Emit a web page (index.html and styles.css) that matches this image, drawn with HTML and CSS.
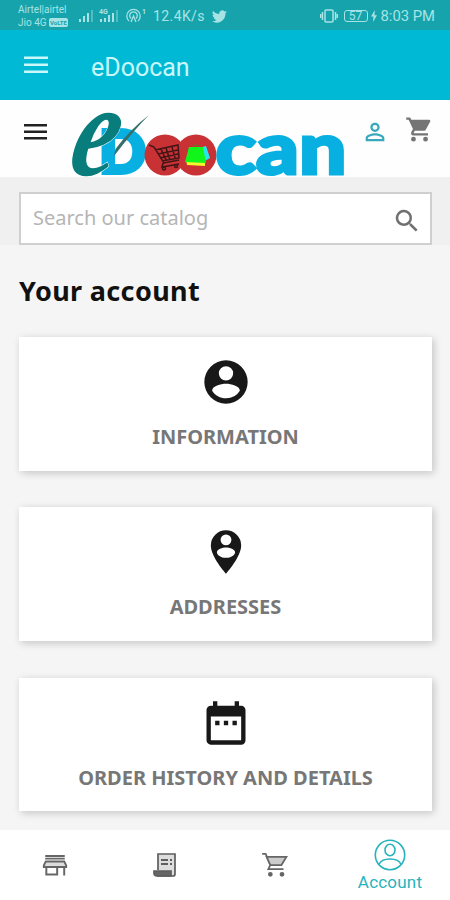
FILE: index.html
```html
<!DOCTYPE html>
<html lang="en">
<head>
<meta charset="utf-8">
<title>eDoocan</title>
<link rel="stylesheet" href="styles.css">
</head>
<body>
<div class="status">
  <div class="carriers"><span>Airtel|airtel</span><span>Jio 4G <b>VoLTE</b></span></div>
  <svg class="signals" width="70" height="20" viewBox="0 0 70 20" fill="currentColor">
    <path d="M0 13h2v3H0zM4 10h2v6H4zM8 7h2v9H8z"/><path opacity=".4" d="M12 4h2v12h-2z"/>
    <path d="M21 13h2v3h-2zM25 12h2v4h-2zM29 9h2v7h-2zM33 7h2v9h-2z"/><path opacity=".4" d="M37 4h2v12h-2z"/>
    <text x="20" y="8" class="tiny">4G</text>
    <g fill="none" stroke="currentColor" stroke-width="1.3"><path d="M50 15a6.7 6.7 0 1 1 9 0M52 12.5a3.8 3.8 0 1 1 5 0"/><path d="m52 16 2.5-6 2.5 6"/></g>
    <text x="63" y="8" class="tiny">1</text>
  </svg>
  <span class="speed">12.4K/s</span>
  <svg class="bird" width="15" height="15" viewBox="0 0 24 24" fill="currentColor"><path d="M23.9 4.6a10 10 0 0 1-2.8.8 5 5 0 0 0 2.1-2.7 10 10 0 0 1-3.1 1.2 4.9 4.9 0 0 0-8.4 4.5A14 14 0 0 1 1.600 3.200a4.900 4.900 0 0 0 1.500 6.500 5 5 0 0 1-2.200-.6c0 2.300 1.600 4.400 3.900 4.900a5 5 0 0 1-2.200.1 4.900 4.900 0 0 0 4.600 3.400A10 10 0 0 1 0 19.500a14 14 0 0 0 21.500-12.400 10 10 0 0 0 2.400-2.500z"/></svg>
  <div class="status-right">
    <svg width="18" height="16" viewBox="0 0 18 16" fill="none" stroke="currentColor" stroke-width="1.5"><rect x="5" y="2" width="8" height="12" rx="1"/><path d="M2.500 4v8M15.500 4v8M.7 6v4M17.300 6v4"/></svg>
    <span class="battery">57</span>
    <svg class="bolt" width="6" height="12" viewBox="0 0 6 12" fill="currentColor"><path d="M3.800 0 0 6.600h2.400L2 12l4-6.800H3.500z"/></svg>
    <span>8:03 PM</span>
  </div>
</div>
<div class="appbar">
  <svg width="24" height="18" viewBox="0 0 24 18" fill="currentColor"><path d="M0 .5h24v2.600H0zM0 7.500h24v2.600H0zM0 14.500h24v2.600H0z"/></svg>
  <span>eDoocan</span>
</div>
<header class="site-header">
  <svg class="menu" width="23" height="16" viewBox="0 0 23 16"><path d="M0 0h23v2.400H0zM0 6.500h23v2.400H0zM0 13h23v2.400H0z"/></svg>
  <svg class="logo" width="280" height="67" viewBox="68 110 280 67">
    <text class="logo-d" x="99" y="173" textLength="47" lengthAdjust="spacingAndGlyphs">D</text>
    <circle cx="165" cy="155" r="20.500" fill="#c93235"/><circle cx="196" cy="155" r="20.500" fill="#c93235"/>
    <text class="logo-e" transform="matrix(.79 0 -.22 1 66 175)">e</text>
    <path d="M149 115q-15 15-35 41l1.500-7q14-19 33.500-34z" fill="#356f6b"/>
    <g fill="none" stroke="#421517" stroke-width="1.500"><path d="m149 145 5 2 10 16 15-3M155 150l23-5 1 13-17 3M158 154l20-4M160 158l18-4M161 149l5 11M166 148l4 12M172 147l3 11M163 163l-1 4 17-3"/><circle cx="164" cy="168.500" r="1.500"/><circle cx="176" cy="166" r="1.500"/></g>
    <path d="m186 160 1 5 18 1v-6z" fill="#f4f52b"/><path d="m199 148 7-2 4 12-7 4z" fill="#27e6f0"/><path d="m189 147 14 0 3 16-21-1z" fill="#12f51b"/><path d="M193 147q4-4 7 0" fill="none" stroke="#4b8524"/>
    <text class="logo-can" x="215.500" y="173.500" textLength="131" lengthAdjust="spacingAndGlyphs">can</text>
  </svg>
  <svg class="person" width="28" height="28" viewBox="0 0 24 24" fill="#38a9bd"><path d="M12 5.900a2.100 2.100 0 1 1 0 4.200 2.100 2.100 0 0 1 0-4.200m0 9c2.970 0 6.100 1.460 6.100 2.100v1.100H5.900V17c0-.64 3.130-2.100 6.100-2.100M12 4C9.790 4 8 5.790 8 8s1.790 4 4 4 4-1.790 4-4-1.790-4-4-4zm0 9c-2.670 0-8 1.340-8 4v3h16v-3c0-2.660-5.330-4-8-4z"/></svg>
  <svg class="cart" width="29" height="29" viewBox="0 0 24 24" fill="#757575"><path d="M7 18a2 2 0 1 0 0 4 2 2 0 0 0 0-4zM1 2v2h2l3.600 7.590-1.350 2.450C4.520 15.370 5.480 17 7 17h12v-2H7.420c-.14 0-.25-.11-.25-.25L8.100 13h7.450c.75 0 1.410-.41 1.750-1.030l3.580-6.490A1 1 0 0 0 20 4H5.210l-.94-2H1zm16 16a2 2 0 1 0 0 4 2 2 0 0 0 0-4z"/></svg>
</header>
<div class="search-band">
  <div class="search"><span>Search our catalog</span>
    <svg width="30" height="30" viewBox="0 0 24 24" fill="#707070"><path d="M15.500 14h-.79l-.28-.27A6.500 6.500 0 1 0 13.730 14.430l.27.28v.79l5 4.990L20.490 19l-4.990-5zm-6 0a4.500 4.500 0 1 1 0-9 4.500 4.500 0 0 1 0 9z"/></svg>
  </div>
</div>
<main>
  <h1>Your account</h1>
  <a class="card">
    <svg width="52" height="52" viewBox="0 0 24 24"><path d="M12 2a10 10 0 1 0 0 20 10 10 0 0 0 0-20zm0 2.700a3.300 3.300 0 1 1 0 6.600 3.300 3.300 0 0 1 0-6.600zm0 14.800c-2.700 0-5-1.300-6.400-3.500.03-2.200 4-3.200 6.400-3.200s6.370 1 6.400 3.200a7.500 7.500 0 0 1-6.400 3.500z"/></svg>
    <span>Information</span>
  </a>
  <a class="card">
    <svg width="52" height="52" viewBox="0 0 24 24"><path fill-rule="evenodd" d="M12 2a7 7 0 0 0-7 7c0 5.250 7 13 7 13s7-7.750 7-13a7 7 0 0 0-7-7zm0 1.900a2.500 2.500 0 1 1 0 5 2.500 2.500 0 0 1 0-5zm0 6c1.700 0 4.200.8 4.200 2.200 0 1.300-1.800 2.600-4.200 2.600s-4.200-1.300-4.200-2.600c0-1.400 2.500-2.200 4.200-2.200z"/></svg>
    <span>Addresses</span>
  </a>
  <a class="card">
    <svg width="52" height="52" viewBox="0 0 24 24"><path d="M9 11H7v2h2v-2zm4 0h-2v2h2v-2zm4 0h-2v2h2v-2zm2-7h-1V2h-2v2H8V2H6v2H5a2 2 0 0 0-2 2v14c0 1.100.89 2 2 2h14a2 2 0 0 0 2-2V6a2 2 0 0 0-2-2zm0 16H5V9h14v11z"/></svg>
    <span>Order history and details</span>
  </a>
</main>
<nav>
  <a><svg width="26" height="24" viewBox="0 0 24 24" preserveAspectRatio="none" fill="none" stroke="#666" stroke-width="1.800"><path d="M3 3h18M3 5.600h18"/><path fill="#ddd" d="M3.500 8.500h17l1.800 4v1.500H1.700v-1.500z"/><path d="M4 14v7.500h10V14M20.500 14v8.500"/></svg></a>
  <a><svg width="24" height="26" viewBox="0 0 24 26" fill="none" stroke="#5e5e5e" stroke-width="1.700"><path fill="#ddd" d="M5 18V2h17v20q0 2-2 2H4"/><path fill="#666" d="M1 19h17v5H4q-3 0-3-3z"/><path d="M8 8h7M8 12h7M17 8h2M17 12h2" stroke-width="2"/></svg></a>
  <a><svg width="28" height="28" viewBox="0 0 24 24" fill="none" stroke="#666" stroke-width="1.500"><path d="M1 2.500h3l4 9.500-1.700 3.500h13"/><path fill="#ccc" d="M4.800 5h17L17.500 12H8z"/><circle cx="8" cy="20" r="1.300" fill="#666"/><circle cx="18" cy="20" r="1.300" fill="#666"/></svg></a>
  <a class="active"><svg width="32" height="32" viewBox="0 0 32 32" fill="none" stroke="currentColor" stroke-width="1.600"><circle cx="16" cy="16" r="14.700"/><ellipse cx="16" cy="11" rx="5" ry="5.800"/><path d="M5 25.500q2-5.500 11-5.500t11 5.500"/></svg><span>Account</span></a>
</nav>
</body>
</html>
```
FILE: styles.css
```css
* { box-sizing: border-box; }
body { margin: 0; width: 450px; height: 900px; overflow: hidden; background: #f5f5f5; font-family: "Noto Sans", sans-serif; display: flex; flex-direction: column; }
svg { display: block; flex: none; }
.status { height: 30px; flex: none; background: #16a3ac; color: #a7e3e5; display: flex; align-items: center; padding: 2px 15px 0 18px; font: 14px Roboto, sans-serif; }
.carriers { width: 61px; display: flex; flex-direction: column; font-size: 10px; line-height: 13px; white-space: nowrap; }
.carriers b { font-size: 6px; background: #a7e3e5; color: #16a3ac; border-radius: 2px; padding: 1px; vertical-align: 1px; }
.tiny { font: bold 7px Roboto, sans-serif; }
.speed { margin-left: 4px; width: 56px; letter-spacing: .4px; }
.bird { margin-left: 3px; }
.status-right { margin-left: auto; display: flex; align-items: center; white-space: nowrap; font-size: 14.800px; }
.battery { margin-left: 6px; width: 24px; height: 12px; border: 1px solid; border-radius: 3px; font-size: 12px; line-height: 10px; text-align: center; }
.bolt { margin: 0 4px 0 3px; }
.appbar { height: 70px; flex: none; background: #00bad5; color: #c9f7fa; display: flex; align-items: center; padding: 4px 24px 0; gap: 43px; font: 25px Roboto, sans-serif; }
.appbar svg { margin-top: -5px; }
.site-header { height: 77px; flex: none; background: #fefefe; display: flex; align-items: flex-start; padding: 10px 16px 0 24px; }
.menu { margin: 14px 21px 0 0; fill: #222; }
.logo { overflow: visible; }
.person { margin: 8px 0 0 13px; }
.cart { margin: 5px 0 0 16px; }
.logo-e { font: italic bold 132px "Liberation Serif", serif; fill: #087d7c; stroke: #fff; stroke-width: 1px; paint-order: stroke; }
.logo-d { font: 900 59px Lato, sans-serif; fill: #08b0e2; stroke: #08b0e2; stroke-width: 4px; }
.logo-can { font: 900 73px Lato, sans-serif; fill: #08b0e2; stroke: #08b0e2; stroke-width: 3px; }
.search-band { height: 68px; flex: none; background: #f0f0f0; padding: 15px 18px 0 19px; }
.search { height: 53px; background: #fff; border: 2px solid #cfcfcf; display: flex; align-items: center; justify-content: space-between; padding: 0 8px 0 12px; font-size: 20px; color: #b5b5b5; }
.search span { margin-top: -2px; }
.search svg { margin-top: 5px; }
main { flex: 1; min-height: 0; overflow: hidden; padding: 28px 18px 0 19px; }
h1 { margin: 0 0 28px; font-size: 27px; line-height: 36px; font-weight: 700; letter-spacing: .35px; color: #111; }
.card { height: 133.500px; margin-bottom: 36.800px; padding-top: 19px; background: #fff; box-shadow: 2px 2px 8px rgba(0,0,0,.2); display: flex; flex-direction: column; align-items: center; fill: #181818; }
.card span { margin-top: 16px; font-size: 20px; line-height: 26px; font-weight: 700; text-transform: uppercase; color: #777; }
nav { height: 70px; flex: none; background: #fff; display: grid; grid-template-columns: 110px 110px 110px 120px; font: 17px Roboto, sans-serif; }
nav a { display: flex; flex-direction: column; align-items: center; justify-content: center; }
.active { color: #27b3bd; gap: 1px; }
.active span { line-height: 20px; letter-spacing: .2px; }
```
